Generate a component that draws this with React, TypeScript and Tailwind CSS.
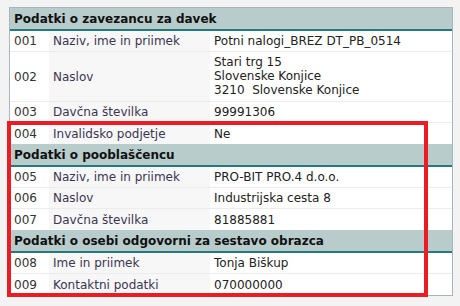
type Row = { code: string; label: string; value: string[] };
type Section = { title: string; rows: Row[] };

const sections: Section[] = [
  {
    title: 'Podatki o zavezancu za davek',
    rows: [
      { code: '001', label: 'Naziv, ime in priimek', value: ['Potni nalogi_BREZ DT_PB_0514'] },
      { code: '002', label: 'Naslov', value: ['Stari trg 15', 'Slovenske Konjice', '3210\u00a0\u00a0Slovenske Konjice'] },
      { code: '003', label: 'Davčna številka', value: ['99991306'] },
      { code: '004', label: 'Invalidsko podjetje', value: ['Ne'] },
    ],
  },
  {
    title: 'Podatki o pooblaščencu',
    rows: [
      { code: '005', label: 'Naziv, ime in priimek', value: ['PRO-BIT PRO.4 d.o.o.'] },
      { code: '006', label: 'Naslov', value: ['Industrijska cesta 8'] },
      { code: '007', label: 'Davčna številka', value: ['81885881'] },
    ],
  },
  {
    title: 'Podatki o osebi odgovorni za sestavo obrazca',
    rows: [
      { code: '008', label: 'Ime in priimek', value: ['Tonja Biškup'] },
      { code: '009', label: 'Kontaktni podatki', value: ['070000000'] },
    ],
  },
];

export default function App() {
  return (
    <div
      className="relative w-[460px] h-[306px] bg-[#f3f3f3] pt-[7px] pl-[9px]"
      style={{ fontFamily: '"DejaVu Sans", Verdana, sans-serif' }}
    >
      <div className="w-[444px] border border-[#aab4bc] bg-white text-[12px] leading-[14px]">
        {sections.map((s) => (
          <div key={s.title}>
            <div className="h-[23px] bg-[#b8cccc] border-b-2 border-[#24787e] px-[4px] flex items-center font-bold text-[#111]">
              {s.title}
            </div>
            {s.rows.map((r, i) => {
              const multi = r.value.length > 1;
              return (
                <div
                  key={r.code}
                  className={`grid grid-cols-[39px_161px_1fr] ${multi ? '' : 'h-[21px]'} ${
                    i < s.rows.length - 1 ? 'border-b border-[#ececec]' : ''
                  }`}
                >
                  <div className="flex items-center px-[4px] text-[#333]">{r.code}</div>
                  <div className="flex items-center px-[4px] bg-[#f7f7f7] text-[#3b3553]">{r.label}</div>
                  <div className={`flex flex-col justify-center px-[4px] text-[#222] ${multi ? 'pt-[3px] pb-[4px]' : ''}`}>
                    {r.value.map((v) => (
                      <span key={v}>{v}</span>
                    ))}
                  </div>
                </div>
              );
            })}
          </div>
        ))}
      </div>
      {/* highlight frame */}
      <div className="absolute left-[7px] top-[121px] w-[421px] h-[176px] border-[4px] border-[#ec1c24]" />
    </div>
  );
}
